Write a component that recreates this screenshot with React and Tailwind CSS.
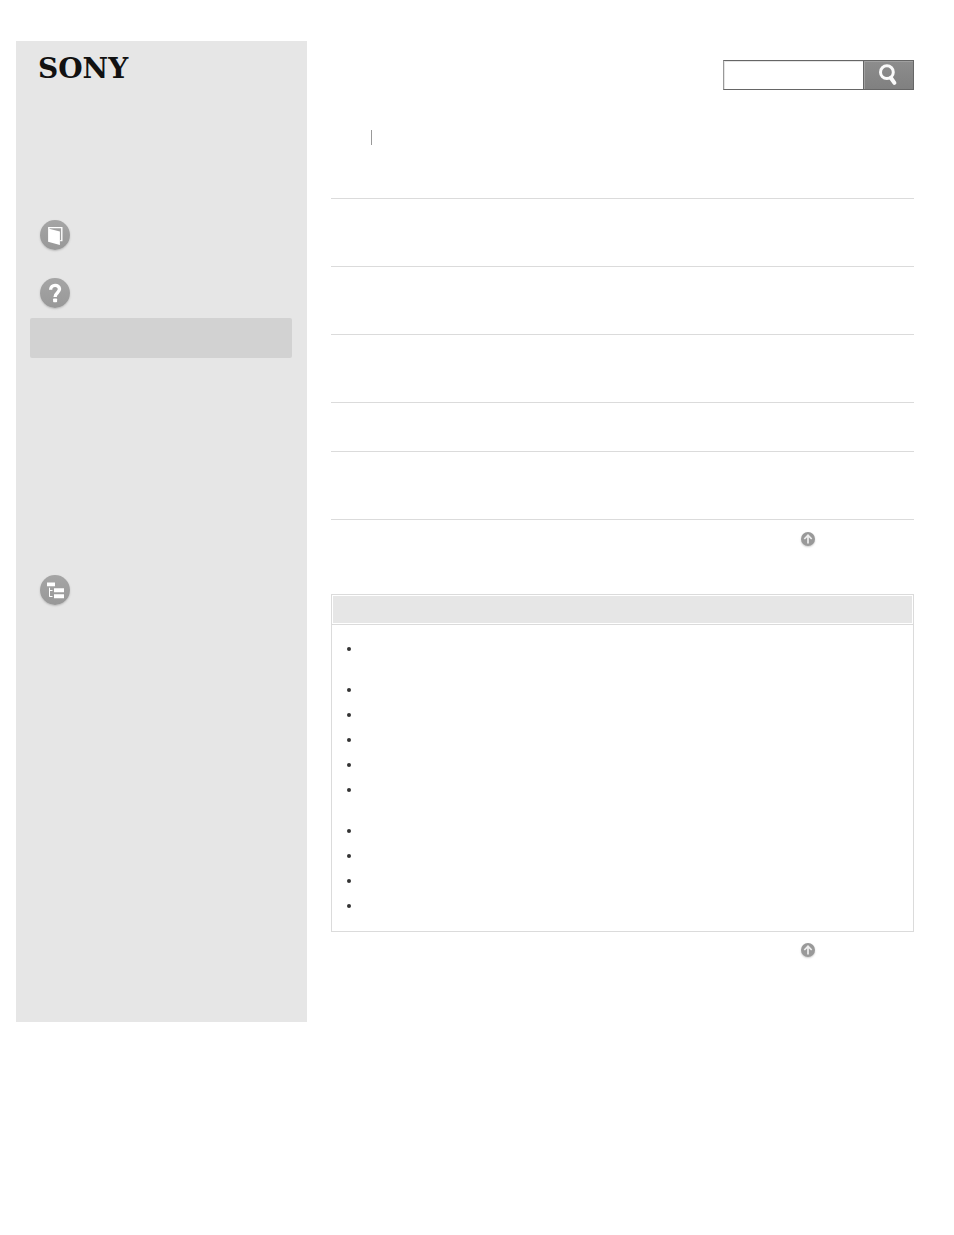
import React, { useState } from "react";

const rows = ["h-[68px]", "h-[68px]", "h-[68px]", "h-[49px]", "h-[68px]"];

// true = the entry takes two lines
const notes = [true, false, false, false, false, true, false, false, false, false];

const RoundIcon = ({ children }) => (
  <svg
    viewBox="0 0 30 30"
    className="block size-[30px] rounded-full bg-linear-to-b from-[#a5a5a5] to-[#989898] shadow-[0_1px_2px_#bbb]"
  >
    {children}
  </svg>
);

const BookIcon = () => (
  <RoundIcon>
    <path d="M8.8 9V7.6h13v13h-1.6" fill="none" stroke="#fff" strokeWidth="1.4" />
    <path d="M8.1 8.4l11.8 3.2v13.3l-11.8-3.2z" fill="#fff" />
  </RoundIcon>
);

const QuestionIcon = () => (
  <RoundIcon>
    <path
      d="M10.6 11.8c0-5.9 8.9-5.7 8.9-.7 0 3.6-4.4 3.6-4.4 7.9"
      fill="none"
      stroke="#fff"
      strokeWidth="3.4"
    />
    <rect x="13.1" y="20.5" width="4" height="3.8" rx="0.8" fill="#fff" />
  </RoundIcon>
);

const TreeIcon = () => (
  <RoundIcon>
    <path
      d="M7 7.4h8v3.8H7zM14 13.2h10v4H14zM14 19.2h10v4H14z"
      fill="#fff"
    />
    <path d="M9.5 12.7v9M9.5 15.5h3M9.5 21.5h3" fill="none" stroke="#fff" strokeWidth="1" />
  </RoundIcon>
);

const BackToTop = () => (
  <a href="#top" aria-label="Back to top" className="block h-4 w-[113px]">
    <svg
      viewBox="0 0 14 14"
      className="block size-3.5 rounded-full bg-[#999] shadow-[0_1px_2px_#ccc]"
    >
      <path d="M7 11.6V3.4M3.3 7L7 3.3 10.7 7" fill="none" stroke="#eee" strokeWidth="1.7" />
    </svg>
  </a>
);

const Sidebar = () => (
  <aside className="w-[291px] shrink-0 bg-[#e6e6e6] px-3.5 pt-3.5 h-[981px]">
    <a
      href="#home"
      className="block h-7 pl-2 text-[28px] leading-7 font-bold text-[#111] font-['DejaVu_Serif',serif]"
    >
      SONY
    </a>
    <nav className="mt-[137px]">
      <a href="#guide" aria-label="Guide" className="block pl-2.5">
        <BookIcon />
      </a>
      <a href="#support" aria-label="Support" className="mt-7 block pl-2.5">
        <QuestionIcon />
      </a>
      <a
        href="#current"
        aria-label="Current page"
        className="mt-2.5 mr-px block h-10 rounded-xs bg-[#d2d2d2]"
      />
      <a href="#contents" aria-label="Contents" className="mt-[217px] block pl-2.5">
        <TreeIcon />
      </a>
    </nav>
  </aside>
);

const SearchBar = () => {
  const [query, setQuery] = useState("");

  return (
    <form className="flex h-[30px] w-[191px]" onSubmit={(e) => e.preventDefault()}>
      <input
        type="text"
        aria-label="Search"
        value={query}
        onChange={(e) => setQuery(e.target.value)}
        className="min-w-0 flex-1 border-y border-l border-y-[#666] border-l-[#999] bg-white px-2 text-sm shadow-[inset_1px_1px_0_#e5e5e5] outline-none"
      />
      <button
        type="submit"
        aria-label="Search"
        className="flex w-[51px] justify-center border border-[#666] bg-linear-to-b from-[#8d8d8d] to-[#808080] pt-[3px] shadow-[inset_1px_1px_0_#a0a0a0]"
      >
        <svg viewBox="0 0 22 22" className="size-[22px]" fill="none" stroke="#fafafa">
          <circle cx="8.9" cy="8.2" r="6.4" strokeWidth="3" />
          <path d="M13 14l3.4 4.8" strokeWidth="4" strokeLinecap="round" />
        </svg>
      </button>
    </form>
  );
};

const App = () => {
  return (
    <div
      id="top"
      className="flex gap-6 bg-white pt-[41px] pr-10 pl-4 font-['Liberation_Sans',Arial,sans-serif] text-[#333]"
    >
      <Sidebar />
      <main className="min-w-0 flex-1 pt-[19px]">
        <div className="flex justify-end">
          <SearchBar />
        </div>
        <div className="mt-10 ml-10 h-[15px] border-l border-[#999]" />

        <ul className="mt-[53px] border-t border-[#dbdbdb]">
          {rows.map((height, i) => (
            <li key={i} className={`border-b border-[#dbdbdb] ${height}`} />
          ))}
        </ul>
        <div className="mt-3 flex justify-end">
          <BackToTop />
        </div>

        <section className="mt-[46px] border border-[#dbdbdb]">
          <div className="border-b border-[#dbdbdb] p-px">
            <h2 className="h-[27px] bg-[#e6e6e6]" />
          </div>
          <ul className="list-disc pt-4 pb-2 pl-[30px] text-[13px] leading-4">
            {notes.map((twoLines, i) => (
              <li key={i} className={twoLines ? "h-[41px]" : "h-[25px]"} />
            ))}
          </ul>
        </section>
        <div className="mt-[11px] flex justify-end">
          <BackToTop />
        </div>
      </main>
    </div>
  );
};

export default App;
